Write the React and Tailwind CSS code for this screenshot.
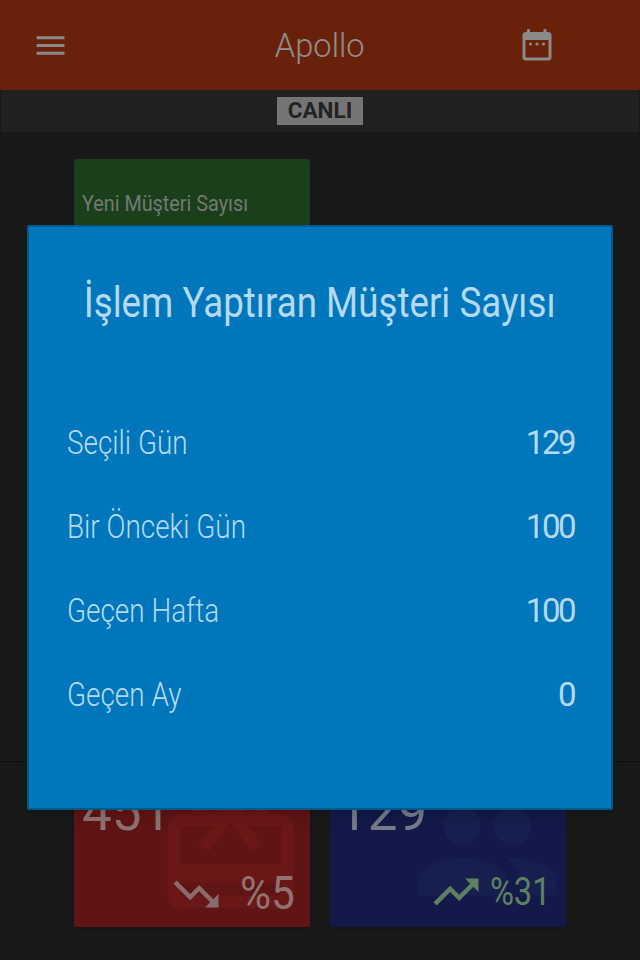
import React from "react";

function Row({ label, value }) {
  return (
    <div className="flex h-[84px] items-center justify-between">
      <span className="inline-block origin-left scale-x-[0.845] text-[33px] font-light whitespace-nowrap text-[#b5d9ef]">{label}</span>
      <span className="-mr-px text-[33px] font-normal tracking-[-2.5px] text-[#b5d9ef]">{value}</span>
    </div>
  );
}

function Card({ bg, icon, children }) {
  return <div className={`relative h-[200px] w-[236px] overflow-hidden rounded-[2px] shadow-md ${bg}`}>{icon}{children}</div>;
}

export default function App() {
  return (
    <div className="relative flex h-[960px] w-[640px] flex-col overflow-hidden bg-[#191919] font-['Roboto',sans-serif]">
      <header className="grid h-[90px] grid-cols-[1fr_auto_1fr] items-center bg-[#6a2109] pr-[88px] pl-[32px]">
        <svg width="37" height="37" viewBox="0 0 24 24" fill="#8a8a8a"><path d="M3 18h18v-2H3v2zm0-5h18v-2H3v2zm0-7v2h18V6H3z" /></svg>
        <span className="ml-[56px] inline-block scale-x-[0.96] text-[34px] font-light text-[#8f8f8f]">Apollo</span>
        <svg className="justify-self-end" width="30" height="32" viewBox="0 0 30 32">
          <rect x="5" y="0" width="3" height="6" rx="1" fill="#8a8a8a" />
          <rect x="21.5" y="0" width="3" height="6" rx="1" fill="#8a8a8a" />
          <rect x="0.5" y="3" width="29" height="28.5" rx="3.5" fill="#8a8a8a" />
          <rect x="3.5" y="11" width="23" height="17.5" fill="#6a2109" />
          <circle cx="8.5" cy="15" r="1.6" fill="#8a8a8a" />
          <circle cx="15" cy="15" r="1.6" fill="#8a8a8a" />
          <circle cx="21.5" cy="15" r="1.6" fill="#8a8a8a" />
        </svg>
      </header>
      <div className="mx-px flex h-[42px] justify-center rounded-b-[2px] bg-[#212121] pt-[7px]">
        <div className="flex h-[28px] w-[86px] items-center justify-center bg-[#757575] text-[22.5px] font-bold text-[#232323]">CANLI</div>
      </div>
      <main className="flex flex-1 flex-col justify-between pt-[27px] pb-[33px] pl-[74px]">
        <div className="flex gap-5">
          <Card bg="bg-[#1a3f1a]">
            <div className="mt-[31px] ml-2 origin-left scale-x-[0.88] text-[22.5px] leading-[26px] whitespace-nowrap text-[#737a73]">Yeni Müşteri Sayısı</div>
          </Card>
        </div>
        <div className="flex gap-5">
          <Card
            bg="bg-[#601414]"
            icon={
              <svg className="absolute right-[4px] bottom-0" width="151" height="151" viewBox="0 0 24 24" fill="#6a1717">
                <path d="M20 6h-2.18c.11-.31.18-.65.18-1 0-1.66-1.34-3-3-3-1.05 0-1.96.54-2.5 1.35l-.5.67-.5-.68C10.96 2.54 10.05 2 9 2 7.34 2 6 3.34 6 5c0 .35.07.69.18 1H4c-1.11 0-1.99.89-1.99 2L2 19c0 1.11.89 2 2 2h16c1.11 0 2-.89 2-2V8c0-1.11-.89-2-2-2zm-5-2c.55 0 1 .45 1 1s-.45 1-1 1-1-.45-1-1 .45-1 1-1zM9 4c.55 0 1 .45 1 1s-.45 1-1 1-1-.45-1-1 .45-1 1-1zm11 15H4v-2h16v2zm0-5H4V8h5.08L7 10.83 8.62 12 11 8.76l1-1.36 1 1.36L15.38 12 17 10.83 14.92 8H20v6z" />
              </svg>
            }
          >
            <div className="relative mt-[60px] ml-[8px] text-[53px] leading-[50px] font-normal text-[#8e7272]">451</div>
            <div className="relative mt-[28px] mr-[15px] flex items-center justify-end">
              <svg className="mt-[2px] mr-[3px]" width="54" height="54" viewBox="0 0 24 24" fill="#8a6b6b"><path d="M16 18l2.29-2.29-4.88-4.88-4 4L2 7.41 3.41 6l6 6 4-4 6.3 6.29L22 12v6z" /></svg>
              <span className="ml-[8px] inline-block origin-right scale-x-[0.9] text-[47px] leading-[54px] font-normal text-[#917272]">%5</span>
            </div>
          </Card>
          <Card
            bg="bg-[#131a4a]"
            icon={
              <svg className="absolute right-[3px] bottom-0" width="151" height="151" viewBox="0 0 24 24" fill="#171f4f">
                <path d="M16 11c1.66 0 2.99-1.34 2.99-3S17.66 5 16 5c-1.66 0-3 1.34-3 3s1.34 3 3 3zm-8 0c1.66 0 2.99-1.34 2.99-3S9.66 5 8 5C6.34 5 5 6.34 5 8s1.34 3 3 3zm0 2c-2.33 0-7 1.17-7 3.5V19h14v-2.5c0-2.33-4.67-3.5-7-3.5zm8 0c-.29 0-.62.02-.97.05 1.16.84 1.97 1.97 1.97 3.45V19h6v-2.5c0-2.33-4.67-3.5-7-3.5z" />
              </svg>
            }
          >
            <div className="relative mt-[60px] ml-[8px] text-[53px] leading-[50px] font-normal text-[#777a8c]">129</div>
            <div className="relative mt-[28px] mr-[15px] flex items-center justify-end">
              <svg className="mr-[1px]" width="54" height="54" viewBox="0 0 24 24" fill="#5e8060"><path d="M16 6l2.29 2.29-4.88 4.88-4-4L2 16.59 3.41 18l6-6 4 4 6.3-6.29L22 12V6z" /></svg>
              <span className="ml-[-4px] inline-block origin-right scale-x-[0.86] text-[38px] leading-[54px] font-normal text-[#5e8060]">%31</span>
            </div>
          </Card>
        </div>
      </main>
      <div className="absolute top-[761px] left-0 h-px w-full bg-[#101010]" />
      <div className="absolute top-[225px] left-[27px] h-[585px] w-[586px] rounded-[2px] border-2 border-[#005a8c] bg-[#0077bd] px-[38px] shadow-lg">
        <h2 className="flex h-[132px] items-center justify-center pt-[19px]">
          <span className="inline-block scale-x-[0.875] text-[42px] font-normal whitespace-nowrap text-[#b5d9ef]">İşlem Yaptıran Müşteri Sayısı</span>
        </h2>
        <div className="mt-[42px]">
          <Row label="Seçili Gün" value="129" />
          <Row label="Bir Önceki Gün" value="100" />
          <Row label="Geçen Hafta" value="100" />
          <Row label="Geçen Ay" value="0" />
        </div>
      </div>
    </div>
  );
}
